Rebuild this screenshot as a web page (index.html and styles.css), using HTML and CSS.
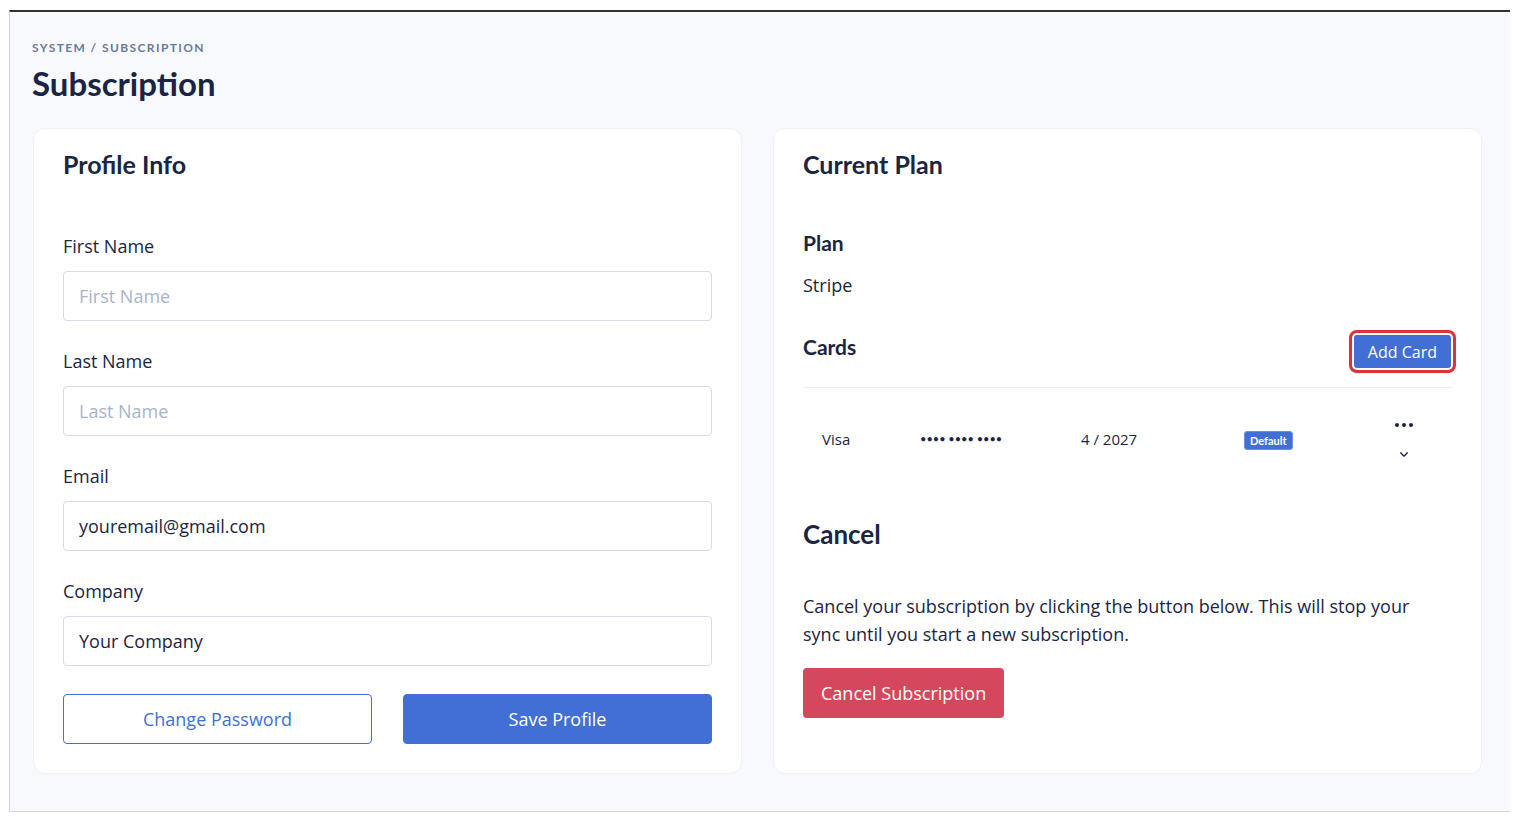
FILE: index.html
```html
<!DOCTYPE html>
<html lang="en">
  <head>
    <meta charset="UTF-8" />
    <meta name="viewport" content="width=device-width, initial-scale=1.0" />
    <title>Subscription</title>
    <link rel="stylesheet" href="styles.css">
  </head>
  <body>
    <div class="frame">
      <div class="crumbs">System / Subscription</div>
      <h1 class="page-title">Subscription</h1>

      <div class="cards">
        <div class="card">
          <h2 class="card-title">Profile Info</h2>

          <div class="fields">
            <div class="field">
              <label for="first-name">First Name</label>
              <input type="text" id="first-name" placeholder="First Name" />
            </div>
            <div class="field">
              <label for="last-name">Last Name</label>
              <input type="text" id="last-name" placeholder="Last Name" />
            </div>
            <div class="field">
              <label for="email">Email</label>
              <input type="text" id="email" value="youremail@gmail.com" />
            </div>
            <div class="field">
              <label for="company">Company</label>
              <input type="text" id="company" value="Your Company" />
            </div>
          </div>

          <div class="actions">
            <button class="btn btn-outline">Change Password</button>
            <button class="btn btn-primary">Save Profile</button>
          </div>
        </div>

        <div class="card">
          <h2 class="card-title">Current Plan</h2>

          <h3 class="section-title plan-title">Plan</h3>
          <div class="plan-name">Stripe</div>

          <div class="cards-head">
            <h3 class="section-title">Cards</h3>
            <button class="add-card">Add Card</button>
          </div>

          <div class="card-row">
            <div>Visa</div>
            <div class="masked">&bull;&bull;&bull;&bull; &bull;&bull;&bull;&bull; &bull;&bull;&bull;&bull;</div>
            <div>4 / 2027</div>
            <div><span class="badge">Default</span></div>
            <div class="row-menu">
              <svg class="dots-icon" viewBox="0 0 18 4" fill="currentColor">
                <circle cx="2" cy="2" r="2" />
                <circle cx="9" cy="2" r="2" />
                <circle cx="16" cy="2" r="2" />
              </svg>
              <svg class="chevron-icon" viewBox="0 0 12 8" fill="none" stroke="currentColor" stroke-width="1.6" stroke-linecap="round" stroke-linejoin="round">
                <path d="M2 2l4 4 4-4" />
              </svg>
            </div>
          </div>

          <h2 class="cancel-title">Cancel</h2>
          <p class="cancel-text">
            Cancel your subscription by clicking the button below. This will stop your
            sync until you start a new subscription.
          </p>
          <button class="btn btn-danger">Cancel Subscription</button>
        </div>
      </div>
    </div>
  </body>
</html>
```

FILE: styles.css
```css
* {
  margin: 0;
  box-sizing: border-box;
}
html {
  background-color: #ffffff;
}
body {
  margin: 10px 10px 0 9px;
  font-family: "Open Sans", "Noto Sans", sans-serif;
  color: #1b2542;
}

.frame {
  width: 1502px;
  height: 802px;
  background-color: #f7f9fc;
  border: 1px solid #d3d5da;
  border-top: 2px solid #3a2d2e;
  padding: 28px 28px 0 22px;
}

.crumbs {
  font-family: Lato, sans-serif;
  font-size: 12px;
  line-height: 16px;
  font-weight: 700;
  letter-spacing: 1.4px;
  text-transform: uppercase;
  color: #6b7a99;
}
.page-title {
  margin-top: 7px;
  font-family: Lato, sans-serif;
  font-size: 33px;
  line-height: 40px;
  font-weight: 700;
  color: #1b2542;
}

.cards {
  display: grid;
  grid-template-columns: 709px 709px;
  gap: 31px;
  margin-top: 25px;
  padding-left: 1px;
}
.card {
  background: #ffffff;
  border: 1px solid #edf0f6;
  border-radius: 12px;
  padding: 20px 29px 30px;
  height: 646px;
}
.card-title {
  font-family: Lato, sans-serif;
  font-size: 25px;
  line-height: 30px;
  font-weight: 700;
}

.fields {
  margin-top: 55px;
}
.field {
  margin-bottom: 28px;
}
.field label {
  display: block;
  font-size: 18px;
  line-height: 24px;
  margin-bottom: 13px;
}
.field input {
  display: block;
  width: 100%;
  height: 50px;
  padding: 0 15px;
  border: 1px solid #d5dbe7;
  border-radius: 4px;
  font-family: inherit;
  font-size: 18px;
  color: #1b2542;
  background: #ffffff;
}
.field input::placeholder {
  color: #a8b4cb;
}

.actions {
  display: grid;
  grid-template-columns: 1fr 1fr;
  gap: 31px;
}
.btn {
  height: 50px;
  border-radius: 4px;
  font-family: inherit;
  font-size: 18px;
  cursor: pointer;
}
.btn-outline {
  background: #ffffff;
  color: #416fd3;
  border: 1px solid #416fd3;
}
.btn-primary {
  background: #416fd3;
  color: #ffffff;
  border: 1px solid #416fd3;
}

.section-title {
  font-family: Lato, sans-serif;
  font-size: 21px;
  line-height: 26px;
  font-weight: 700;
}
.plan-title {
  margin-top: 51px;
}
.plan-name {
  margin-top: 17px;
  font-size: 18px;
  line-height: 24px;
}
.cards-head {
  margin-top: 37px;
  display: flex;
  justify-content: space-between;
  align-items: flex-start;
  padding-bottom: 19px;
  border-bottom: 1px solid #eceff5;
}
.add-card {
  margin-top: 1px;
  margin-right: 1px;
  height: 33px;
  padding: 0 14px;
  background: #416fd3;
  color: #ffffff;
  border: none;
  border-radius: 3px;
  font-family: inherit;
  font-size: 16px;
  box-shadow: 0 0 0 2px #ffffff, 0 0 0 5px #e0303a;
  cursor: pointer;
}

.card-row {
  display: grid;
  grid-template-columns: 98px 161px 163px 1fr auto;
  align-items: center;
  padding: 31px 38px 31px 19px;
  font-size: 15px;
}
.masked {
  font-family: Lato, sans-serif;
  font-size: 11px;
}
.badge {
  display: inline-block;
  margin-top: 3px;
  background: #416fd3;
  color: #ffffff;
  font-family: Lato, sans-serif;
  font-size: 11px;
  font-weight: 700;
  line-height: 15px;
  padding: 1px 5px;
  border: 1px solid #6c8fe0;
  border-radius: 3px;
}
.row-menu {
  display: flex;
  flex-direction: column;
  align-items: center;
  gap: 24px;
  width: 20px;
  padding-top: 4px;
}
.dots-icon {
  width: 18px;
  height: 4px;
}
.chevron-icon {
  width: 10px;
  height: 7px;
}

.cancel-title {
  margin-top: 29px;
  font-family: Lato, sans-serif;
  font-size: 26px;
  line-height: 32px;
  font-weight: 700;
}
.cancel-text {
  max-width: 625px;
  margin-top: 42px;
  font-size: 18px;
  line-height: 28px;
}
.btn-danger {
  margin-top: 20px;
  background: #d4475c;
  color: #ffffff;
  border: none;
  padding: 0 18px;
}
```
